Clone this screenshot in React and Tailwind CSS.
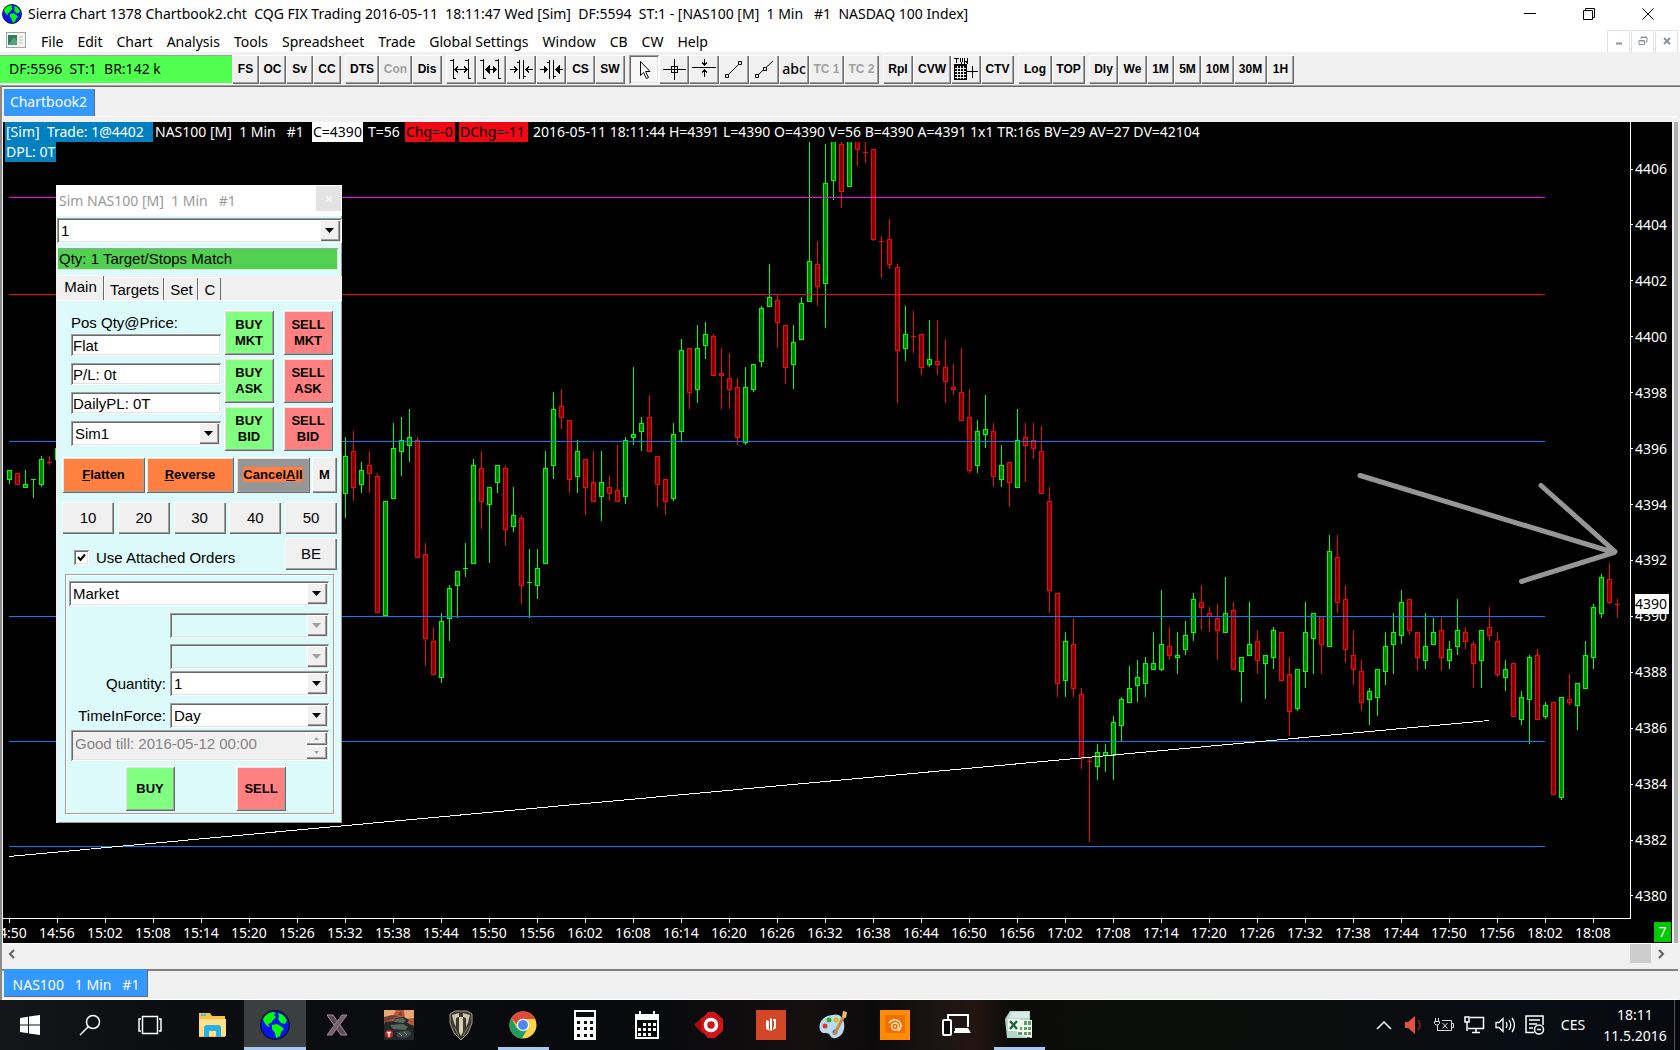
import React from "react";

const RAISED = "bg-[#f0f0f0] shadow-[inset_1px_1px_0_#fff,inset_-1px_-1px_0_#696969,inset_-2px_-2px_0_#a0a0a0]";
const BEVEL = "shadow-[inset_1px_1px_0_#fff,inset_-1px_-1px_0_#696969,inset_2px_2px_0_#e3e3e3,inset_-2px_-2px_0_#a0a0a0]";
const SUNKEN = "shadow-[inset_1px_1px_0_#a0a0a0,inset_-1px_-1px_0_#fff,inset_2px_2px_0_#696969,inset_-2px_-2px_0_#e3e3e3]";
const UI = "font-['Noto_Sans','Open_Sans',sans-serif]";
const ARIAL = "font-['Liberation_Sans',Arial,sans-serif]";

/* One-minute bars: first index, then [direction, high, body top, body bottom, low]. */
const RUNS = [
  [0, [
    ["u",470,470,480,484],["d",473,473,485,485],["u",470,484,488,488],["u",479,479,480,498],["u",456,459,485,487],
    ["d",456,462,463,465],["u",448,448,460,460],
  ]],
  [42, [
    ["u",437,456,494,518],["d",431,451,488,501],["u",462,470,485,493],["d",451,465,474,493],["d",473,476,613,613],
    ["u",501,501,616,616],["u",423,448,499,499],["u",417,440,452,476],["u",409,437,446,462],["d",437,440,558,558],
    ["d",543,554,639,666],["d",627,641,675,675],["u",613,621,678,683],["u",585,588,619,641],["u",571,571,586,618],
    ["u",543,568,569,577],["u",459,465,564,564],["d",451,468,502,529],["u",487,487,505,563],["u",465,465,483,493],
    ["d",465,468,530,546],["u",487,515,527,532],["d",515,518,586,604],["u",549,582,583,618],["u",549,568,586,599],
    ["u",451,468,564,564],["u",392,409,466,479],["d",389,406,418,429],["d",420,420,480,493],["u",440,451,477,493],
    ["d",459,459,488,515],["d",451,482,502,502],["u",451,482,497,521],["d",476,487,494,501],["d",445,490,502,502],
    ["u",437,440,497,504],["u",367,434,438,445],["u",417,423,432,451],["d",395,417,452,452],["d",456,456,485,507],
    ["d",479,479,502,515],["u",423,434,499,501],["u",339,350,432,441],["d",348,348,393,409],["u",325,348,390,403],
    ["u",322,334,346,359],["d",334,336,376,376],["d",348,373,376,409],["d",353,378,390,409],["d",378,387,438,445],
    ["u",367,387,443,445],["u",364,364,390,392],["u",306,308,362,367],["u",264,297,307,307],["d",294,300,323,348],
    ["d",325,325,368,384],["u",325,342,365,389],["u",297,303,340,340],["u",142,261,302,302],["d",241,264,287,306],
    ["u",144,183,284,328],["u",130,130,181,200],["d",130,144,192,208],["u",130,130,187,187],["d",130,130,150,166],
    ["d",130,152,153,163],["d",149,149,240,241],["d",236,241,242,278],["d",219,239,265,269],["d",264,267,351,403],
    ["u",306,334,349,361],["d",311,336,337,353],["d",334,334,368,375],["u",320,359,365,367],["d",320,361,365,375],
    ["d",339,367,382,403],["d",364,387,390,395],["d",348,392,421,421],["d",389,417,471,473],["u",420,431,466,473],
    ["u",395,429,435,448],["d",423,431,477,487],["u",445,465,480,487],["d",462,462,483,507],["u",409,440,488,488],
    ["d",423,437,446,482],["d",423,440,449,459],["d",426,451,494,494],["d",487,501,591,613],["d",593,593,684,697],
    ["u",632,641,681,697],["d",618,644,689,697],["d",688,694,759,769],["d",757,761,762,842],["u",744,752,767,780],
    ["u",744,752,756,772],["u",716,722,756,780],["u",697,699,726,741],["u",666,688,703,703],["u",660,677,686,702],
    ["u",657,663,684,697],["u",632,663,670,670],["u",590,644,670,671],["d",627,646,656,660],["u",632,655,658,674],
    ["u",621,635,650,655],["u",593,599,633,641],["d",585,602,608,630],["d",607,613,617,632],["d",604,618,631,660],
    ["u",577,613,633,633],["d",602,610,670,670],["u",657,657,672,702],["u",602,644,656,656],["d",630,641,661,674],
    ["u",655,655,664,699],["u",627,630,658,669],["d",632,632,681,681],["d",657,674,712,736],["u",669,669,709,711],
    ["u",602,632,672,688],["u",613,613,639,674],["d",616,616,645,674],["u",535,551,647,647],["d",535,557,603,613],
    ["d",585,599,650,663],["d",630,655,670,685],["d",660,671,703,711],["u",688,691,700,725],["u",669,669,698,716],
    ["u",632,646,672,685],["u",613,632,645,674],["u",590,602,636,644],["d",599,599,631,635],["d",632,632,658,671],
    ["u",613,646,661,669],["u",618,632,645,645],["d",617,630,658,671],["u",641,649,661,669],["u",599,630,647,655],
    ["d",627,632,642,649],["d",641,644,664,688],["u",630,630,661,688],["d",607,627,636,641],["d",632,641,675,677],
    ["u",660,669,678,691],["d",663,663,717,717],["u",691,697,720,725],["u",655,657,700,744],["d",649,655,720,720],
    ["u",702,705,717,719],["d",702,702,795,795],["u",697,697,798,800],["d",674,699,703,705],["u",683,683,706,730],
    ["u",641,655,689,689],["u",604,607,658,669],["u",574,577,614,618],["d",563,579,603,604],["d",599,604,605,618],
  ]],
];
const BARS = RUNS.flatMap(([start, list]) => list.map((b, k) => [start + k, ...b]));

const LEVELS = [
  [197, "#ff00ff"], [294, "#f00814"], [441, "#0080ff"], [616, "#0080ff"], [741, "#0080ff"], [846, "#0080ff"],
];

const TIMES = Array.from({ length: 34 }, (_, i) => {
  const m = 14 * 60 + 50 + i * 6;
  return `${Math.floor(m / 60)}:${String(m % 60).padStart(2, "0")}`;
});
const PRICES = Array.from({ length: 14 }, (_, i) => 4406 - i * 2);

function Globe({ className }) {
  return (
    <svg viewBox="0 0 30 30" className={className} aria-hidden="true">
      <circle cx="15" cy="15" r="14.3" fill="#0a14f0" stroke="#05101c" strokeWidth="1.2" />
      <path d="M5 6L9 3l4-1 3 1-2 2 2 2-3 3-2 3-3 1 2 3-3-1-3-4-1-3z" fill="#0f0" />
      <path d="M12 15l5-1 5 3 2 2-3 3-1 4-4 2-1-5-3-4z" fill="#0f0" />
      <path d="M18 3l5 2 4 5-2 4-4-1-3-4 1-2z" fill="#0f0" />
    </svg>
  );
}

function Menu() {
  return (
    <nav className="flex h-6 items-center bg-white pl-1.5 text-sm">
      <svg width="20" height="16" viewBox="0 0 20 16" className="mr-2" aria-hidden="true">
        <rect x=".5" y=".5" width="19" height="15" fill="#f4f6ee" stroke="#9aa6b4" />
        <rect x="2" y="3" width="9" height="10" fill="#2f7d5b" />
        <path d="M3 12l5-7 3 4v4H3z" fill="#58a37c" />
        <path d="M13 5h4M13 8h4M13 11h4" stroke="#b9c8a0" />
      </svg>
      {["File", "Edit", "Chart", "Analysis", "Tools", "Spreadsheet", "Trade", "Global Settings", "Window", "CB", "CW", "Help"].map((t) => (
        <button key={t} className="px-[7px] pt-[3px] whitespace-nowrap">{t}</button>
      ))}
      <div className="ml-auto flex gap-px pt-0.5 pr-0.5">
        <button aria-label="Minimize chart" className="grid h-[23px] w-[23px] place-items-center border border-[#e3e3e3]">
          <svg width="10" height="10"><path d="M2 7.5h6" stroke="#8a91a5" strokeWidth="2" /></svg>
        </button>
        <button aria-label="Restore chart" className="grid h-[23px] w-[23px] place-items-center border border-[#e3e3e3]">
          <svg width="10" height="10" fill="none" stroke="#8a91a5"><path d="M3 3V1.5h6V6H7.500M3 1h6M1 4.500h5.500v4H1zM1 5h5" /></svg>
        </button>
        <button aria-label="Close chart" className="grid h-[23px] w-[23px] place-items-center border border-[#e3e3e3]">
          <svg width="10" height="10"><path d="M2 2l6 6M8 2L2 8" stroke="#8a91a5" strokeWidth="2" /></svg>
        </button>
      </div>
    </nav>
  );
}

const S = { fill: "none", stroke: "#000", strokeWidth: 1, shapeRendering: "crispEdges" };
const ICONS = {
  "Increase spacing": <g {...S}><path d="M5.500 2v20M2 3.500h3M5 21.500h3M20.500 2v20M17 3.500h3M20 21.500h3M7 12.500h12M10 9.500l-3 3 3 3M16 9.500l3 3-3 3" /></g>,
  "Increase bar width": <g {...S}><path d="M5.500 2v20M2 3.500h3M5 21.500h3M20.500 2v20M17 3.500h3M20 21.500h3M8 12.500h10" /><path d="M8 12.500l3-3v6zM18 12.500l-3-3v6z" fill="#000" /></g>,
  "Decrease spacing": <g {...S}><path d="M11.500 3v19M9 5.500h2M15.500 3v19M15 19.500h3M2 12.500h7M18 12.500h7M6 9.500l3 3-3 3M21 9.500l-3 3 3 3" /></g>,
  "Decrease bar width": <g {...S}><path d="M11.500 3v19M9 5.500h2M15.500 3v19M15 19.500h3M2 12.500h7M18 12.500h7" /><path d="M9 12.500l-3-3v6zM18 12.500l3-3v6z" fill="#000" /></g>,
  Pointer: <path d="M9.500 4.500v14l3-3 3 6 2-1-3-6h4.500z" fill="#fff" stroke="#000" />,
  Crosshair: <g {...S}><path d="M13.500 2v21M2 12.500h23M10.500 9.500h6v6h-6z" /></g>,
  "Horizontal line": <g {...S}><path d="M1 10.500h24M13.500 2v6M11 5.500l2.500 2.500 2.500-2.500M13.500 13v7M11 15.500l2.500-2.500 2.500 2.500" /></g>,
  "Trend line": <g fill="none" stroke="#000"><path d="M7 18L18 7" /><path d="M4.500 17.500h3v3h-3zM17.500 4.500h3v3h-3z" /></g>,
  Ray: <g fill="none" stroke="#000"><path d="M7 18L22 4" /><path d="M4.500 17.500h3v3h-3zM12.500 10.500h3v3h-3z" fill="#f0f0f0" /></g>,
};

function TvwIcon() {
  return (
    <svg width="27" height="24" viewBox="0 0 27 24" shapeRendering="crispEdges" aria-hidden="true">
      <path d="M1 1.500h5M3.500 1v5M7.500 1v3l1 2 1-2V1M11.500 1v5l1.500-2 1.500 2V1" stroke="#000" fill="none" />
      <rect x="1" y="7" width="13" height="16" />
      <path d="M4.500 9v13M7.500 9v13M10.500 9v13M2 11.500h11M2 14.500h11M2 17.500h11M2 20.500h11" stroke="#f0f0f0" />
      <path d="M19.500 9v12M14 14.500h11" stroke="#000" />
    </svg>
  );
}

function Tool({ w, label, off }) {
  const pressed = label === "Pointer";
  const face = label === "abc" ? "text-sm font-medium" : `text-xs font-bold ${ARIAL}`;
  return (
    <button
      style={{ width: w }}
      disabled={off}
      aria-label={label}
      className={`grid h-[29px] shrink-0 place-items-center overflow-hidden ${face} ${off ? "text-[#a0a0a0]" : "text-black"} ${pressed ? `bg-[#f8f8f8] ${SUNKEN}` : RAISED}`}
    >
      {ICONS[label] ? <svg width="27" height="25" viewBox="0 0 27 25" aria-hidden="true">{ICONS[label]}</svg> : label === "TVW" ? <TvwIcon /> : label}
    </button>
  );
}

const GROUPS = [
  [[27, "FS"], [27, "OC"], [27, "Sv"], [28, "CC"]],
  [[34, "DTS"], [33, "Con", true], [30, "Dis"]],
  [[30, "Increase spacing"], [30, "Increase bar width"], [30, "Decrease spacing"], [30, "Decrease bar width"], [29, "CS"], [30, "SW"]],
  [[30, "Pointer"], [30, "Crosshair"], [30, "Horizontal line"], [30, "Trend line"], [30, "Ray"], [30, "abc"], [35, "TC 1", true], [35, "TC 2", true]],
  [[30, "Rpl"], [38, "CVW"], [30, "TVW"], [33, "CTV"]],
  [[34, "Log"], [33, "TOP"]],
  [[29, "Dly"], [29, "We"], [27, "1M"], [27, "5M"], [33, "10M"], [33, "30M"], [27, "1H"]],
];

function Toolbar() {
  return (
    <div className="flex h-[34px] items-center border-b border-[#a0a0a0] bg-[#f0f0f0] pt-px shadow-[0_1px_0_#696969]">
      <div className="flex h-7 w-[232px] shrink-0 items-center bg-[#50ff50] pl-[9px] text-sm whitespace-pre shadow-[inset_0_1px_0_#a0a0a0]">
        DF:5596  ST:1  BR:142 k
      </div>
      <div className="flex gap-1">
        {GROUPS.map((g, i) => (
          <div key={i} className="flex">{g.map(([w, label, off]) => <Tool key={label} w={w} label={label} off={off} />)}</div>
        ))}
      </div>
    </div>
  );
}

function Combo({ label, value, className = "", off, id, field = "pl-1" }) {
  return (
    <div className={`relative h-[25px] ${className}`}>
      <select id={id} aria-label={id ? undefined : label} disabled={off} className={`h-full w-full appearance-none ${field} text-[15px] text-black opacity-100 ${off ? "bg-[#dcfafa]" : "bg-white"} ${SUNKEN}`}>
        <option>{value}</option>
      </select>
      <span className={`pointer-events-none absolute top-0.5 right-0.5 bottom-0.5 grid w-5 place-items-center ${RAISED}`}>
        <svg width="10" height="6" aria-hidden="true"><path d="M0 0h9L4.500 5z" fill={off ? "#a0a0a0" : "#000"} /></svg>
      </span>
    </div>
  );
}

function Field({ label, value }) {
  return <input aria-label={label} readOnly value={value} className={`h-[22px] w-[150px] bg-white pl-0.5 text-[15px] ${SUNKEN}`} />;
}

function Trade({ color, children }) {
  return (
    <button className={`h-[45px] w-[50px] text-[13px] leading-4 font-bold ${color === "buy" ? "bg-[#80ff80]" : "bg-[#ff8080]"} ${BEVEL}`}>
      {children}
    </button>
  );
}

function TradeWindow() {
  return (
    <section className={`absolute top-[63px] left-[53px] w-[286px] bg-[#dcfafa] pb-[9px] text-[15px] text-black shadow-[inset_2px_0_0_#f0f0f0,inset_-1px_-1px_0_#a0a0a0,inset_-2px_-2px_0_#f0f0f0] ${ARIAL}`}>
      <header className="flex h-[31px] items-center justify-between bg-white pl-[3px]">
        <h2 className={`text-sm whitespace-pre text-[#999] ${UI}`}>Sim NAS100 [M]  1 Min   #1</h2>
        <button aria-label="Close" className="mr-px mb-1 grid h-[25px] w-[25px] place-items-center bg-[#e3e3e3]">
          <svg width="8" height="8"><path d="M1 1l6 6M7 1L1 7" stroke="#f8f8f8" strokeWidth="1.500" /></svg>
        </button>
      </header>
      <Combo label="Symbol quantity" value="1" className="ml-px mt-[2px]" />
      <div className="mx-[2px] mt-[5px] mr-1 h-[22px] bg-[#50d250] pl-px leading-[21px] shadow-[inset_0_1px_0_#a0a0a0,inset_-1px_-1px_0_#e3e3e3]">Qty: 1 Target/Stops Match</div>
      <div className="mt-[6px] flex h-[25px] items-end border-b border-white bg-[#f0f0f0] pl-px" role="tablist">
        <button role="tab" aria-selected="true" className="h-[25px] w-[47px] border-t border-white pb-0.5 shadow-[inset_-1px_0_0_#696969]">Main</button>
        <button role="tab" className="h-[23px] w-[60px] border-t border-l border-white pt-px shadow-[inset_-1px_0_0_#696969]">Targets</button>
        <button role="tab" className="h-[23px] w-[34px] border-t border-l border-white pt-px shadow-[inset_-1px_0_0_#696969]">Set</button>
        <button role="tab" className="h-[23px] w-[23px] border-t border-l border-white pt-px shadow-[inset_-1px_0_0_#696969]">C</button>
      </div>

      <div className="flex pt-[9px] pl-[15px]">
        <div className="flex w-[150px] flex-col gap-[7px] pt-[5px]">
          <div className="flex flex-col">
            <span className="h-[19px] leading-4">Pos Qty@Price:</span>
            <Field label="Position" value="Flat" />
          </div>
          <Field label="Profit and loss" value="P/L: 0t" />
          <Field label="Daily profit and loss" value="DailyPL: 0T" />
          <Combo label="Account" value="Sim1" />
        </div>
        <div className="ml-[3px] grid grid-cols-2 content-start gap-x-[9px] gap-y-[3px]">
          <Trade color="buy">BUY<br />MKT</Trade><Trade>SELL<br />MKT</Trade>
          <Trade color="buy">BUY<br />ASK</Trade><Trade>SELL<br />ASK</Trade>
          <Trade color="buy">BUY<br />BID</Trade><Trade>SELL<br />BID</Trade>
        </div>
      </div>

      <div className="mt-[6px] ml-[6px] flex text-[13px] font-bold">
        <button className={`h-9 w-[83px] bg-[#ff8040] ${BEVEL}`}><u>F</u>latten</button>
        <button className={`ml-px h-9 w-[88px] bg-[#ff8040] ${BEVEL}`}><u>R</u>everse</button>
        <button className={`ml-[2px] h-9 w-[74px] bg-[#969696] ${BEVEL}`}><span className="bg-[#ff8040]">Cancel<u>A</u>ll</span></button>
        <button className={`ml-[2px] h-9 w-[25px] ${RAISED}`}>M</button>
      </div>

      <div className="mt-[9px] mr-[5px] ml-[6px] flex justify-between">
        {[10, 20, 30, 40, 50].map((n) => <button key={n} className={`h-8 w-[52px] ${RAISED}`}>{n}</button>)}
      </div>
      <div className="mt-1 mr-[5px] ml-[18px] flex justify-between">
        <label className="flex items-center gap-[7px] pt-[7px]">
          <span className="relative grid">
            <input type="checkbox" defaultChecked className={`peer h-[15px] w-[15px] appearance-none bg-white ${SUNKEN}`} />
            <svg width="9" height="9" viewBox="0 0 9 9" className="pointer-events-none absolute top-[3px] left-[3px] hidden peer-checked:block" aria-hidden="true"><path d="M1 4l2.500 3L8 1.500" fill="none" stroke="#000" strokeWidth="2" /></svg>
          </span>
          Use Attached Orders
        </label>
        <button className={`h-8 w-[52px] ${RAISED}`}>BE</button>
      </div>

      <div className="mt-[4px] mr-2 ml-[9px] border border-[#a0a0a0] pt-[6px] pr-[4px] pb-[2px] pl-[3px] shadow-[1px_1px_0_#fff,inset_1px_1px_0_#fff]">
        <Combo label="Order type" value="Market" />
        <Combo label="Price 1" value="" off className="mt-[7px] ml-[101px]" />
        <Combo label="Price 2" value="" off className="mt-[6px] ml-[101px]" />
        <div className="mt-[2px] flex items-center">
          <label htmlFor="qty" className="w-[97px] text-right">Quantity:</label>
          <Combo id="qty" value="1" className="ml-1 flex-1" />
        </div>
        <div className="mt-[7px] flex items-center">
          <label htmlFor="tif" className="w-[97px] text-right">TimeInForce:</label>
          <Combo id="tif" value="Day" className="ml-1 flex-1" />
        </div>
        <div className={`mt-[2px] ml-[2px] flex h-[31px] justify-between bg-[#f0f0f0] p-0.5 ${SUNKEN}`}>
          <input aria-label="Good till" disabled value="Good till: 2016-05-12 00:00" className="mb-[3px] w-[220px] pl-0.5 text-[15px] text-[#838383]" />
          <div className="flex w-[21px] flex-col gap-px">
            <button aria-label="Later" className={`grid flex-1 place-items-center ${RAISED}`}><svg width="5" height="3"><path d="M0 3h5L2.500 0z" fill="#a0a0a0" /></svg></button>
            <button aria-label="Earlier" className={`grid flex-1 place-items-center ${RAISED}`}><svg width="5" height="3"><path d="M0 0h5L2.500 3z" fill="#a0a0a0" /></svg></button>
          </div>
        </div>
        <div className="mt-[5px] ml-[56px] flex gap-[61px]">
          <Trade color="buy">BUY</Trade>
          <Trade>SELL</Trade>
        </div>
      </div>
    </section>
  );
}

function Chart() {
  return (
    <main className="relative flex min-h-[821px] flex-1 flex-col overflow-hidden bg-black text-sm text-white">
      <div className="flex flex-1">
        <div className="relative flex-1 border-r border-b border-white">
          <svg className="absolute inset-0 h-full w-full" aria-label="NAS100 one minute candlestick chart">
            <g transform="translate(-3 -122)" shapeRendering="crispEdges">
              {BARS.map(([i, dir, high, top, bottom, low]) => {
                const x = 9 + i * 8;
                const line = dir === "u" ? "#00ff00" : "#f00814";
                const fill = dir === "u" ? "#008000" : "#800000";
                return (
                  <g key={i}>
                    <rect x={x} y={high} width="1" height={Math.max(low - high, 1)} fill={line} />
                    {bottom - top <= 1
                      ? <rect x={x - 2} y={top} width="5" height="1" fill={line} />
                      : <rect x={x - 1.5} y={top + 0.5} width="4" height={bottom - top - 1} fill={fill} stroke={line} />}
                  </g>
                );
              })}
              {LEVELS.map(([y, c]) => <rect key={y} x="9" y={y} width="1536" height="1" fill={c} />)}
              <path d="M9 856.500L1489 720.500" stroke="#fff" fill="none" />
              <g fill="none" stroke="#969696" strokeWidth="5" shapeRendering="auto" strokeLinecap="round">
                <path d="M1360 475.500L1614 552.500M1541 485.500L1615 551.500M1521.500 581.500L1614 552.500" />
              </g>
            </g>
          </svg>
          <div className="relative pl-0.5 leading-5 whitespace-pre">
            <div className="flex h-5 bg-black">
              <span className="w-[148px] overflow-hidden bg-[#0080c0] pl-px">[Sim]  Trade: 1@4402</span>
              <span className="w-[159px] overflow-hidden pl-0.5">NAS100 [M]  1 Min   #1</span>
              <span className="w-[51px] overflow-hidden bg-white pl-px text-black">C=4390</span>
              <span className="w-[42px] overflow-hidden pl-[5px]">T=56</span>
              <span className="w-[50px] overflow-hidden bg-[#f00814] pl-px text-black">Chg=-0</span>
              <span className="ml-1 w-[69px] overflow-hidden bg-[#f00814] pl-px text-black">DChg=-11</span>
              <span className="pl-[5px]">2016-05-11 18:11:44 H=4391 L=4390 O=4390 V=56 B=4390 A=4391 1x1 TR:16s BV=29 AV=27 DV=42104</span>
            </div>
            <div className="flex"><span className="w-[51px] overflow-hidden bg-[#0080c0] pl-px">DPL: 0T</span></div>
          </div>
        </div>
        <div className="relative flex w-[41px] flex-col justify-between pt-[37px] pb-[13px]">
          {PRICES.map((p) => (
            <div key={p} className="flex h-5 items-center leading-5"><span className="mr-0.5 h-px w-0.5 bg-white" />{p}</div>
          ))}
          <div className="absolute top-[472px] left-1 h-5 w-[34px] bg-white leading-5 text-black">4390</div>
        </div>
      </div>
      <div className="flex h-6 shrink-0">
        <div className="-ml-[18px] flex flex-1 overflow-hidden">
          {TIMES.map((t) => (
            <div key={t} className="flex w-12 shrink-0 flex-col items-center">
              <span className="h-1 w-px bg-white" />
              <span className="leading-5">{t}</span>
            </div>
          ))}
        </div>
        <div className="mt-[3px] mr-px h-5 w-[17px] bg-[#00c800] text-center leading-5">7</div>
      </div>
      <TradeWindow />
    </main>
  );
}

const APPS = [
  ["File Explorer", <svg width="30" height="26" viewBox="0 0 30 26"><path d="M1 1h11l2 3h13v21H1z" fill="#f5c445" /><path d="M1 7h27v17H1z" fill="#ffe08a" /><path d="M6 25v-9q0-3 3-3h11q3 0 3 3v9h-5v-6h-7v6z" fill="#28b1e6" /><path d="M3 2h5v2H3z" fill="#5fb8e6" /></svg>],
  ["Sierra Chart", <Globe className="h-[30px] w-[30px]" />, "active"],
  ["X", <svg width="24" height="24" viewBox="0 0 24 24"><path d="M2 2h6l14 20h-6z" fill="#5b4a55" stroke="#a493a0" /><path d="M22 2h-5L2 22h5z" fill="#75616e" stroke="#988794" /></svg>],
  ["Tank game", <svg width="30" height="30" viewBox="0 0 30 30"><path fill="#b5583e" d="M0 0h30v30H0z" /><path d="M0 0h12l-3 6-9 4zM20 0h10v8l-9 1z" fill="#e8a673" /><path d="M0 7l8-2 6 1-5 3-9 3zM14 5l3-4 1 5z" fill="#6f4238" /><path d="M1 12l9-1 1-3 9-1 5 3-2 3 7 3v14H0V15z" fill="#20282a" /><path d="M11 9l8-1 3 3-3 2-9-1zM6 15l13-1 5 3-3 3-12-1z" fill="#58665e" /><path d="M13 22l11-2 4 4-6 4-9-1z" fill="#3d4a46" /><path d="M15 23l3 3M20 22l3 3" stroke="#8a968c" /><circle cx="5" cy="24" r="4" fill="#c22" /><path d="M3 22.500h4M5 22v5" stroke="#fff" strokeWidth="1.500" /></svg>],
  ["World of Tanks", <svg width="24" height="30" viewBox="0 0 24 30"><path d="M1 4l5-3h12l5 3v9l-4 10-7 7-7-7-4-10z" fill="#3a382f" stroke="#a8a48e" /><path d="M3 5l7-2v4L7 8v9l-2-4zM21 5l-7-2v4l3 1v9l2-4z" fill="#cbc6ad" /><path d="M10 7h4v15l-2 4-2-4z" fill="#d5d0b6" /><path d="M5 17l5 9M19 17l-5 9" stroke="#87826c" /></svg>],
  ["Chrome", <svg width="28" height="28" viewBox="0 0 28 28"><circle cx="14" cy="14" r="13.500" fill="#fbd447" /><path d="M2.300 7.200A13.500 13.500 0 0 1 26.300 8H14a6 6 0 0 0-6 6z" fill="#dc4b3e" /><path d="M2.300 7.200A13.500 13.500 0 0 0 13 27.500l6-10.500-5 3-6-3z" fill="#1e9f60" /><circle cx="14" cy="14" r="6.200" fill="#fff" /><circle cx="14" cy="14" r="5" fill="#4a8af4" /></svg>, "open"],
  ["Calculator", <svg width="22" height="30" viewBox="0 0 22 30"><path d="M0 0h22v30H0z" fill="#fff" /><path d="M2 2h18v5H2zM3 11h3v3H3zM10 11h3v3h-3zM16 11h3v3h-3zM3 17h3v3H3zM10 17h3v3h-3zM16 17h3v3h-3zM3 24h3v3H3zM10 24h3v3h-3zM16 24h3v3h-3z" fill="#0b0c0e" /></svg>],
  ["Calendar", <svg width="26" height="29" viewBox="0 0 26 29"><path d="M1 8V3h4V0h2v3h12V0h2v3h4v25H1zM3 9v17h20V9z" fill="#fff" fillRule="evenodd" /><path d="M9 12h3v3H9zM14 12h3v3h-3zM19 12h3v3h-3zM4 17h3v3H4zM9 17h3v3H9zM14 17h3v3h-3zM19 17h3v3h-3zM4 22h3v3H4zM9 22h3v3H9zM14 22h3v3h-3z" fill="#fff" /></svg>],
  ["Camera", <svg width="30" height="26" viewBox="0 0 30 26"><path d="M0 13L9 4v18z" fill="#a30d0d" /><path d="M7 8L14 0h7l8 7v12l-8 7h-7l-7-8z" fill="#cf151b" /><circle cx="17" cy="13" r="5.500" fill="none" stroke="#fff" strokeWidth="3.500" /></svg>],
  ["Reader", <svg width="30" height="30" viewBox="0 0 30 30"><path d="M0 0h30v30H0z" fill="#d24726" /><path d="M10 10l3 1v8l1 2-4-2zM14 8l2 1v12l-2-1zM17 9h3v9l-3 2v-2l1-1v-6h-1z" fill="#fff" /></svg>],
  ["Paint", <svg width="30" height="30" viewBox="0 0 30 30"><path d="M14 5C4 6 0 14 2 20c2 5 7 2 9 4s2 5 7 4c8-2 10-12 7-18S19 4 14 5z" fill="#b6dcee" /><circle cx="7" cy="16" r="2.500" fill="#d33" /><circle cx="11" cy="10" r="2.500" fill="#3a3" /><circle cx="18" cy="10" r="2.500" fill="#e7b321" /><circle cx="17" cy="22" r="2.500" fill="#37b" /><path d="M27 4L16 25" stroke="#c98a3d" strokeWidth="3" /><path d="M25 1l4 1-1 6-4-1z" fill="#e9bd6e" /></svg>],
  ["Recorder", <svg width="30" height="30" viewBox="0 0 30 30"><path d="M0 0h30v30H0z" fill="#ff8c00" /><path d="M5 5h20v18H5z" fill="#f07000" /><circle cx="15" cy="16.500" r="3.500" fill="none" stroke="#ffe6c4" strokeWidth="1.500" /><circle cx="15" cy="16.500" r="1" fill="#fff" /><path d="M9 13q3-4 7-3t5 5q0 4-3 6" stroke="#ffe6c4" strokeWidth="1.500" fill="none" /></svg>],
  ["Phone Companion", <svg width="30" height="22" viewBox="0 0 30 22"><path d="M6 5V1h20v12M12 18h13" fill="none" stroke="#fff" strokeWidth="2" /><rect x="1" y="6" width="8" height="15" rx="1" fill="#0b0c0e" stroke="#fff" strokeWidth="2" /><path d="M13 14h13l3 5H13z" fill="#fff" /></svg>],
  ["Excel", <svg width="28" height="28" viewBox="0 0 28 28"><path d="M5 0h20v22l-3 5H2L0 8z" fill="#b4d6c8" /><path d="M7 1h17v6H4z" fill="#d8ebe2" /><path d="M12 9h15v18l-15-3z" fill="#f2f8ee" /><path d="M13 16h4v3h-4zM19 10h3v4h-3zM23 10h3v4h-3zM19 16h3v3h-3zM23 16h3v3h-3zM13 21h4v3h-4zM19 21h3v3h-3zM23 21h3v3h-3z" fill="#5c9c68" /><path d="M3 8h12v12H3z" fill="#f4faf4" /><path d="M5 10l7 8M12 10l-7 8" stroke="#1d6b36" strokeWidth="2.500" /></svg>, "open"],
];

function Taskbar() {
  return (
    <footer className="flex h-[50px] shrink-0 bg-[linear-gradient(90deg,#15161a_0%,#0d0e12_9%,#0a0c10_20%,#07090b_38%,#150f10_48%,#0b0a0b_52%,#1b1513_56%,#241512_58%,#0b0c0a_60%,#0a0d0b_78%,#080c14_90%,#07090e_100%)] text-white">
      <button aria-label="Start" className="grid w-[60px] place-items-center"><svg width="20" height="20" viewBox="0 0 20 20" fill="#fff"><path d="M0 3l8-1.200V9.500H0zM9 1.600L20 0v9.500H9zM0 10.500h8v7.700L0 17zM9 10.500h11V20L9 18.400z" /></svg></button>
      <button aria-label="Search" className="grid w-[60px] place-items-center"><svg width="22" height="22" viewBox="0 0 22 22" fill="none" stroke="#fff" strokeWidth="1.500"><circle cx="14" cy="8" r="6.500" /><path d="M9.500 12.500L1 21" /></svg></button>
      <button aria-label="Task view" className="grid w-[60px] place-items-center"><svg width="24" height="20" viewBox="0 0 24 20" fill="none" stroke="#fff" strokeWidth="1.500"><path d="M4.500 1.500h15v17h-15zM3 4H1v12h2M21 4h2v12h-2" /></svg></button>
      <div className="ml-0.5 flex">
        {APPS.map(([name, icon, state]) => (
          <button key={name} aria-label={name} className={`flex w-[62px] flex-col items-center ${state === "active" ? "bg-[#3b3f40]" : ""}`}>
            <span className="grid flex-1 place-items-center pt-[3px]">{icon}</span>
            <span className={`h-[3px] ${state ? "bg-[#a9c9f5]" : ""} ${state === "active" ? "w-full" : "w-[51px]"}`} />
          </button>
        ))}
      </div>
      <div className="ml-auto flex items-center">
        <div className="flex items-center text-white">
          <button aria-label="Show hidden icons" className="grid w-[30px] place-items-center"><svg width="16" height="9" fill="none" stroke="#fff" strokeWidth="1.500"><path d="M1 8l7-7 7 7" /></svg></button>
          <button aria-label="Audio manager" className="grid w-[30px] place-items-center"><svg width="18" height="18"><path d="M0 6h3l7-6v18l-7-6H0z" fill="#e0533d" /><path d="M13 4q4 5 0 10" stroke="#6b1f18" fill="none" strokeWidth="2" /></svg></button>
          <button aria-label="Battery" className="grid w-[30px] place-items-center"><svg width="20" height="14" fill="none" stroke="#ddd"><path d="M8 2.500h9.500v10H4M18 5.500h1.500v4H18M8.500 5l5 5.500M13.500 5l-5 5.500M1.500 0v3M4.500 0v3M.5 3.500h5v2l-1.500 1.500h-2L.5 5.500zM3.500 7v6" /></svg></button>
          <button aria-label="Network" className="grid w-[31px] place-items-center"><svg width="21" height="18" fill="none" stroke="#fff" strokeWidth="1.500"><path d="M6 1.500h13.500v11H4M12 13v4M8 16.500h8M1 1h4v5H1zM3 6v9" /></svg></button>
          <button aria-label="Volume" className="grid w-[30px] place-items-center"><svg width="20" height="18" fill="none" stroke="#fff" strokeWidth="1.300"><path d="M1 6.500h3l4-4v13l-4-4H1zM11 6q2 3 0 6M14 4q3.500 5 0 10M17 2q5 7 0 14" /></svg></button>
          <button aria-label="Notifications" className="grid w-[30px] place-items-center"><svg width="20" height="20" fill="none" stroke="#fff" strokeWidth="1.500"><path d="M9 17.500H1V1h17v9M4 5h11M4 9h8M4 13h4" /><circle cx="14" cy="14.500" r="4.500" /><path d="M12 14.500h4" /></svg></button>
        </div>
        <button className="w-[46px] text-sm">CES</button>
        <time className="w-[78px] text-center text-sm leading-[21px]">18:11<br />11.5.2016</time>
        <button aria-label="Show desktop" className="h-full w-1.5 border-l border-[#555]" />
      </div>
    </footer>
  );
}

export default function App() {
  return (
    <div className={`flex min-h-screen flex-col bg-[#f0f0f0] text-black ${UI}`}>
      <header className="flex h-7 items-center bg-white pl-0.5">
        <Globe className="mr-1.5 h-5 w-5" />
        <h1 className="text-sm whitespace-pre">Sierra Chart 1378 Chartbook2.cht  CQG FIX Trading 2016-05-11  18:11:47 Wed [Sim]  DF:5594  ST:1 - [NAS100 [M]  1 Min   #1  NASDAQ 100 Index]</h1>
        <div className="ml-auto flex h-full pr-[3px]">
          <button aria-label="Minimize" className="grid w-[59px] place-items-center"><svg width="12" height="12"><path d="M0 5.500h12" stroke="#000" /></svg></button>
          <button aria-label="Restore" className="grid w-[59px] place-items-center"><svg width="12" height="12" fill="none" stroke="#000"><path d="M.5 2.500h9v9h-9zM2.500 2V.5h9v9H10" /></svg></button>
          <button aria-label="Close" className="grid w-[59px] place-items-center"><svg width="12" height="12"><path d="M.5.5l11 11M11.500.5l-11 11" stroke="#000" /></svg></button>
        </div>
      </header>
      <Menu />
      <Toolbar />
      <div className="flex flex-1 flex-col border-l-2 border-[#8a8a8a] pr-0.5">
        <div className="mt-[3px] flex h-[28px] items-end border-b border-white pl-0.5">
          <button className="mt-auto h-[27px] w-[91px] bg-[#3399ff] pr-0.5 pb-0.5 text-center text-sm text-white shadow-[inset_-1px_0_0_#696969]">Chartbook2</button>
        </div>
        <div className="mt-[5px] flex flex-1 border-r-4 border-[#adadad] pl-px">
          <div className="flex flex-1 flex-col border-r-2 border-[#f0f0f0]"><Chart /></div>
        </div>
        <div className="flex h-[21px] items-center justify-between border-t border-white pr-[7px] pl-px">
          <button aria-label="Scroll left" className="grid w-4 place-items-center"><svg width="7" height="10" fill="none" stroke="#606060" strokeWidth="2"><path d="M6 1L2 5l4 4" /></svg></button>
          <div className="flex h-full">
            <span className="h-[19px] w-[21px] bg-[#cdcdcd]" />
            <button aria-label="Scroll right" className="grid w-5 place-items-center"><svg width="7" height="10" fill="none" stroke="#606060" strokeWidth="2"><path d="M1 1l4 4-4 4" /></svg></button>
          </div>
        </div>
        <div className="mt-[5px] flex h-[28px] border-t-2 border-[#808080] pl-0.5">
          <button className="-mt-0.5 h-[28px] w-[144px] bg-[#3399ff] pt-1 text-sm whitespace-pre text-white shadow-[inset_-1px_-1px_0_#696969]">NAS100   1 Min   #1</button>
        </div>
        <div className="h-[3px] border-b border-white" />
      </div>
      <Taskbar />
    </div>
  );
}
